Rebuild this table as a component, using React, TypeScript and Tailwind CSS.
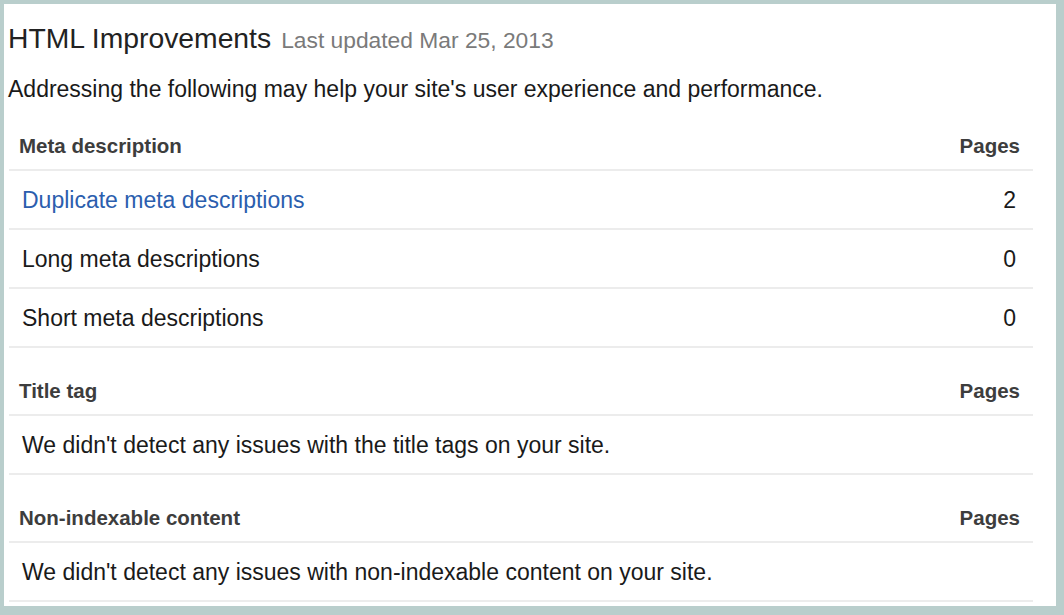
type Row = { label: string; count?: string; link?: boolean };

const sections: { title: string; rows: Row[] }[] = [
  {
    title: "Meta description",
    rows: [
      { label: "Duplicate meta descriptions", count: "2", link: true },
      { label: "Long meta descriptions", count: "0" },
      { label: "Short meta descriptions", count: "0" },
    ],
  },
  {
    title: "Title tag",
    rows: [{ label: "We didn't detect any issues with the title tags on your site." }],
  },
  {
    title: "Non-indexable content",
    rows: [{ label: "We didn't detect any issues with non-indexable content on your site." }],
  },
];

export default function App() {
  return (
    <div
      className="w-[1064px] h-[615px] bg-[#b9cecc] pt-[4px] pl-[4px] pr-[8px] pb-[9px]"
      style={{ fontFamily: '"Liberation Sans", Arial, sans-serif' }}
    >
      <div className="w-full h-full bg-white flex flex-col overflow-hidden">
        {/* heading */}
        <div className="flex items-baseline gap-[10px] pl-[4px] pt-[18px]">
          <h1 className="text-[28.3px] leading-[32px] text-[#222]">HTML Improvements</h1>
          <span className="text-[22.8px] leading-[32px] text-[#7a7a7a]">Last updated Mar 25, 2013</span>
        </div>
        <p className="pl-[4px] mt-[19px] text-[23px] leading-[28px] text-[#1a1a1a]">
          Addressing the following may help your site's user experience and performance.
        </p>

        <div className="ml-[5px] mr-[23px]">
          {sections.map((section) => (
            <div key={section.title}>
              <div className="flex justify-between pt-[31px] pb-[11px] pl-[10px] pr-[13px] border-b-2 border-[#ececec] text-[20.5px] leading-[24px] font-bold text-[#3d3d3d]">
                <span>{section.title}</span>
                <span>Pages</span>
              </div>
              {section.rows.map((row) => (
                <div
                  key={row.label}
                  className="h-[59px] flex items-center justify-between pl-[13px] pr-[17px] border-b-2 border-[#ececec] text-[23px] leading-[28px]"
                >
                  <span className={row.link ? "text-[#2b5eae]" : "text-[#1a1a1a]"}>{row.label}</span>
                  {row.count && <span className="text-[#1a1a1a]">{row.count}</span>}
                </div>
              ))}
            </div>
          ))}
        </div>
      </div>
    </div>
  );
}
